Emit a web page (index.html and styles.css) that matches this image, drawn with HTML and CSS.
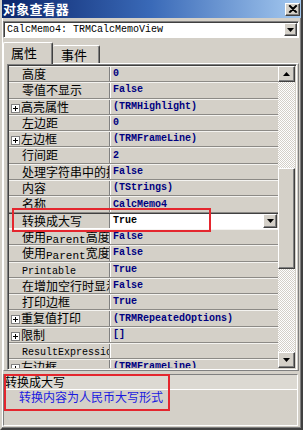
FILE: index.html
```html
<!DOCTYPE html>
<html>
<head>
<meta charset="utf-8">
<link rel="stylesheet" href="styles.css">
</head>
<body>
<div class="window">
  <div class="titlebar">
    <span class="title">对象查看器</span>
    <span class="close btn3d">
      <svg width="10" height="9" viewBox="0 0 10 9"><path d="M1 0.5 L8 7.5 M2 0.5 L9 7.5 M8 0.5 L1 7.5 M9 0.5 L2 7.5" stroke="#000" stroke-width="1.2"/></svg>
    </span>
  </div>
  <div class="body">
    <div class="combo">
      <span class="combo-text">CalcMemo4: TRMCalcMemoView</span>
      <span class="dd btn3d"><svg width="7" height="4" viewBox="0 0 7 4"><path d="M0 0 H7 L3.5 4 Z" fill="#000"/></svg></span>
    </div>
    <div class="tabs">
      <div class="tab active">属性</div>
      <div class="tab">事件</div>
    </div>
    <div class="sheet">
      <div class="grid">
        <div class="rows">
          <div class="row"><div class="name">高度</div><div class="val">0</div></div>
          <div class="row"><div class="name">零值不显示</div><div class="val">False</div></div>
          <div class="row"><div class="name exp"><span class="plus"></span>高亮属性</div><div class="val">(TRMHighlight)</div></div>
          <div class="row"><div class="name">左边距</div><div class="val">0</div></div>
          <div class="row"><div class="name exp"><span class="plus"></span>左边框</div><div class="val">(TRMFrameLine)</div></div>
          <div class="row"><div class="name">行间距</div><div class="val">2</div></div>
          <div class="row"><div class="name">处理字符串中的换行</div><div class="val">False</div></div>
          <div class="row"><div class="name">内容</div><div class="val">(TStrings)</div></div>
          <div class="row"><div class="name">名称</div><div class="val">CalcMemo4</div></div>
          <div class="row sel"><div class="name">转换成大写</div><div class="val"><span class="edit">True</span><span class="cell-dd btn3d"><svg width="7" height="4" viewBox="0 0 7 4"><path d="M0 0 H7 L3.5 4 Z" fill="#000"/></svg></span></div></div>
          <div class="row"><div class="name">使用<span class="mx">Parent</span>高度</div><div class="val">False</div></div>
          <div class="row"><div class="name">使用<span class="mx">Parent</span>宽度</div><div class="val">False</div></div>
          <div class="row"><div class="name"><span class="m">Printable</span></div><div class="val">True</div></div>
          <div class="row"><div class="name">在增加空行时显示</div><div class="val">False</div></div>
          <div class="row"><div class="name">打印边框</div><div class="val">True</div></div>
          <div class="row"><div class="name exp"><span class="plus"></span>重复值打印</div><div class="val">(TRMRepeatedOptions)</div></div>
          <div class="row"><div class="name exp"><span class="plus"></span>限制</div><div class="val">[]</div></div>
          <div class="row"><div class="name"><span class="m">ResultExpression</span></div><div class="val"></div></div>
          <div class="row"><div class="name exp"><span class="plus"></span>左边框</div><div class="val">(TRMFrameLine)</div></div>
        </div>
        <div class="vscroll">
          <div class="sbtn btn3d"><svg width="7" height="4" viewBox="0 0 7 4"><path d="M0 4 H7 L3.5 0 Z" fill="#000"/></svg></div>
          <div class="track"><div class="thumb btn3d"></div></div>
          <div class="sbtn btn3d"><svg width="7" height="4" viewBox="0 0 7 4"><path d="M0 0 H7 L3.5 4 Z" fill="#000"/></svg></div>
        </div>
      </div>
    </div>
    <div class="desc">
      <div class="desc-title">转换成大写</div>
      <div class="desc-text">转换内容为人民币大写形式</div>
    </div>
  </div>
  <div class="mark mark-row"></div>
  <div class="mark mark-desc"></div>
</div>
</body>
</html>
```

FILE: styles.css
```css
html, body {
  margin: 0;
  padding: 0;
  background: #d4d0c8;
}
body {
  font-family: "Noto Sans CJK SC", "Liberation Sans", sans-serif;
  font-size: 12px;
  color: #000;
}
.window {
  position: relative;
  width: 303px;
  height: 430px;
  box-sizing: border-box;
  border-left: 2px solid #d4d0c8;
  border-right: 2px solid #404040;
  border-bottom: 2px solid #404040;
  box-shadow: inset -1px -1px #808080, inset 1px 0 #fff;
  display: flex;
  flex-direction: column;
  overflow: hidden;
}
.btn3d {
  background: #d4d0c8;
  box-sizing: border-box;
  border: 1px solid;
  border-color: #fff #404040 #404040 #fff;
  box-shadow: inset -1px -1px #808080;
  display: flex;
  align-items: center;
  justify-content: center;
}
.titlebar {
  height: 18px;
  flex: none;
  margin-left: -2px;
  margin-right: -2px;
  background: linear-gradient(to right, #0a246a, #3a6ab8 50%, #a6caf0);
  display: flex;
  align-items: center;
  justify-content: space-between;
  padding: 0 3px 0 3px;
}
.title {
  color: #fff;
  font-weight: bold;
  font-size: 13px;
  line-height: 18px;
  letter-spacing: 0.2px;
}
.close {
  width: 15px;
  height: 13px;
  margin-top: 1px;
}
.body {
  flex: 1;
  display: flex;
  flex-direction: column;
  padding: 0 1px 2px 1px;
}
.combo {
  margin-top: 3px;
  height: 17px;
  width: 296px;
  box-sizing: border-box;
  border: 1px solid;
  border-color: #808080 #fff #fff #808080;
  box-shadow: inset 1px 1px #404040;
  background: #fff;
  display: flex;
  align-items: center;
  justify-content: space-between;
  padding: 0 1px 0 3px;
  flex: none;
}
.combo-text {
  font-family: "Liberation Mono", monospace;
  font-size: 10px;
  line-height: 14px;
}
.dd {
  width: 13px;
  height: 13px;
}
.tabs {
  margin-top: 4px;
  height: 21px;
  display: flex;
  align-items: flex-end;
  flex: none;
  position: relative;
  z-index: 1;
}
.tab {
  box-sizing: border-box;
  height: 18px;
  padding: 0 9px 0 9px;
  font-size: 13px;
  line-height: 17px;
  border-top: 1px solid #fff;
  border-left: 1px solid #fff;
  border-right: 1px solid #404040;
  box-shadow: inset -1px 0 #808080;
  border-radius: 2px 2px 0 0;
}
.tab.active {
  height: 22px;
  width: 50px;
  margin-bottom: -1px;
  padding-left: 7px;
  line-height: 20px;
  background: #d4d0c8;
}
.tab:not(.active) {
  width: 47px;
  border-left: none;
  padding-left: 8px;
}
.sheet {
  flex: none;
  width: 296px;
  box-sizing: border-box;
  border-top: 1px solid #fff;
  border-left: 1px solid #fff;
  border-right: 1px solid #808080;
  border-bottom: 1px solid #808080;
  padding: 0 1px 0 3px;
}
.grid {
  height: 306px;
  box-sizing: border-box;
  border: 1px solid;
  border-color: #808080 #fff #fff #808080;
  box-shadow: inset 1px 1px #404040, inset -1px -1px #d4d0c8;
  padding: 1px 1px 1px 1px;
  display: flex;
}
.rows {
  flex: 1;
  overflow: hidden;
  display: flex;
  flex-direction: column;
}
.row {
  flex: none;
  height: 16.3px;
  box-sizing: border-box;
  display: flex;
  border-bottom: 1px solid #8c8a86;
  border-top: 1px solid #f4f3f0;
}
.name {
  width: 101px;
  flex: none;
  box-sizing: border-box;
  border-right: 1px solid #808080;
  padding-left: 13px;
  white-space: nowrap;
  overflow: hidden;
  line-height: 14px;
}
.name.exp {
  padding-left: 2px;
}
.plus {
  display: inline-block;
  vertical-align: -1px;
  width: 9px;
  height: 9px;
  box-sizing: border-box;
  border: 1px solid #808080;
  background:
    linear-gradient(#000, #000) center / 5px 1px no-repeat,
    linear-gradient(#000, #000) center / 1px 5px no-repeat,
    #fff;
  margin-right: 1px;
}
.m {
  font-family: "Liberation Mono", monospace;
  font-size: 10px;
  vertical-align: 1px;
}
.mx {
  font-family: "Liberation Mono", monospace;
  font-size: 11px;
  vertical-align: -1px;
}
.val {
  flex: 1;
  border-left: 1px solid #fff;
  padding-left: 2px;
  font-family: "Liberation Mono", monospace;
  font-size: 10px;
  font-weight: bold;
  color: #000080;
  line-height: 14px;
  white-space: nowrap;
  overflow: hidden;
  display: flex;
  align-items: center;
}
.row.sel {
  border-top: 1px solid #404040;
  border-bottom: 1px solid #fff;
}
.row.sel .val {
  padding: 1px 1px 0 0;
  border-left: none;
}
.edit {
  flex: 1;
  background: #fff;
  color: #000;
  height: 14px;
  padding-left: 3px;
  line-height: 14px;
}
.cell-dd {
  width: 14px;
  height: 14px;
  flex: none;
}
.vscroll {
  width: 17px;
  flex: none;
  display: flex;
  flex-direction: column;
}
.sbtn {
  height: 16px;
  flex: none;
}
.track {
  flex: 1;
  background: repeating-conic-gradient(#ffffff 0 25%, #d4d0c8 0 50%) 0 0 / 2px 2px;
}
.thumb {
  margin-top: 86px;
  height: 101px;
}
.desc {
  margin-top: 3px;
  height: 52px;
  width: 295px;
  flex: none;
  box-sizing: border-box;
  border: 1px solid;
  border-color: #808080 #fff #fff #808080;
  box-shadow: inset -1px -1px #d4d0c8;
  display: flex;
  flex-direction: column;
}
.desc-title {
  height: 14px;
  line-height: 14px;
  padding-left: 1px;
  border-bottom: 1px solid #fff;
  background: #dcd9d2;
}
.desc-text {
  height: 14px;
  line-height: 14px;
  padding-left: 15px;
  color: #1a1ae0;
}
.mark {
  position: absolute;
  box-sizing: border-box;
  border: 2px solid #e4262e;
  pointer-events: none;
}
.mark-row {
  left: 10px;
  top: 208px;
  width: 199px;
  height: 24px;
}
.mark-desc {
  left: 2px;
  top: 374px;
  width: 166px;
  height: 37px;
}
```
